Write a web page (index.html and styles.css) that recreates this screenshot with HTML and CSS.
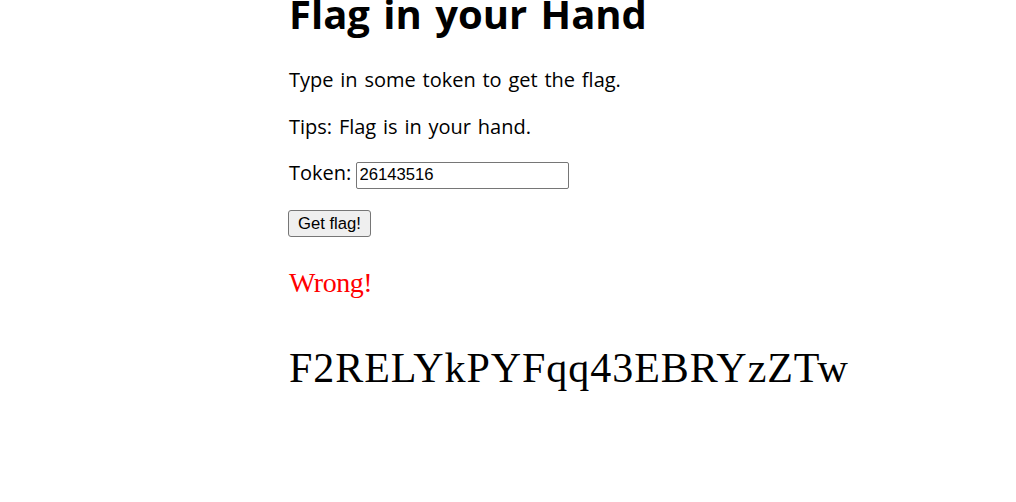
FILE: index.html
```html
<!DOCTYPE html>
<html lang="en">
<head>
<meta charset="utf-8">
<title>Flag in your Hand</title>
<link rel="stylesheet" href="styles.css">
</head>
<body>
<main class="page">
  <h1 class="title">Flag in your Hand</h1>
  <p class="text">Type in some token to get the flag.</p>
  <p class="text">Tips: Flag is in your hand.</p>
  <form class="form">
    <p class="text token-row">Token: <input class="token" type="text" value="26143516"></p>
    <p class="text btn-row"><button class="btn" type="button">Get flag!</button></p>
  </form>
  <p class="wrong">Wrong!</p>
  <p class="flag">F2RELYkPYFqq43EBRYzZTw</p>
</main>
</body>
</html>
```
FILE: styles.css
```css
html, body {
  margin: 0;
  padding: 0;
  background: #ffffff;
}

body {
  font-family: "Open Sans", "Noto Sans", sans-serif;
  font-size: 20px;
  color: #000000;
  overflow: hidden;
}

.page {
  padding-left: 289px;
}

.title {
  font-size: 40px;
  font-weight: 700;
  line-height: 53px;
  word-spacing: 3px;
  margin: -13px 0 27px;
}

.text {
  margin: 20px 0;
  line-height: 26.6px;
  word-spacing: 1.6px;
}

.token-row {
  word-spacing: 0;
}

.form {
  margin: 0;
}

.token {
  box-sizing: border-box;
  width: 213px;
  height: 27px;
  margin: 0 0 0 -1px;
  padding: 1px 3px;
  border: 1px solid #767676;
  border-radius: 2px;
  font-family: "Liberation Sans", Arial, sans-serif;
  font-size: 16.67px;
  letter-spacing: normal;
  color: #000000;
  background: #ffffff;
  vertical-align: baseline;
}

.btn-row {
  margin-bottom: 0;
}

.btn {
  box-sizing: border-box;
  height: 27px;
  margin: 0 0 0 -1px;
  padding: 0 9px;
  border: 1px solid #767676;
  border-radius: 3px;
  background: #efefef;
  font-family: "Liberation Sans", Arial, sans-serif;
  font-size: 16.67px;
  color: #000000;
}

.wrong {
  font-family: "Liberation Serif", "Times New Roman", serif;
  font-size: 28px;
  letter-spacing: -0.5px;
  color: #ff0000;
  margin: 30px 0 0;
}

.flag {
  font-family: "Liberation Serif", "Times New Roman", serif;
  font-size: 42px;
  letter-spacing: 0.95px;
  color: #000000;
  margin: 45px 0 0;
}
```
